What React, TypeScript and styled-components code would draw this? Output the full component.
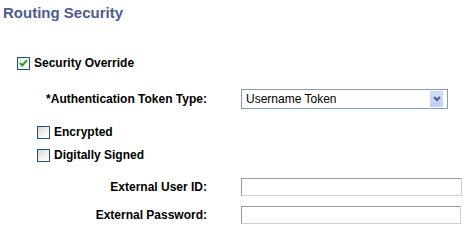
import styled, { createGlobalStyle } from "styled-components";

const GlobalStyle = createGlobalStyle`
  body {
    margin: 0;
    background: #fff;
    font-family: "Liberation Sans", Arial, sans-serif;
  }
`;

const Page = styled.div`
  width: 475px;
  height: 229px;
  padding: 4px 0 0 3px;
  box-sizing: border-box;
  display: flex;
  flex-direction: column;
`;

const Title = styled.h2`
  margin: 0;
  font-size: 15px;
  line-height: 18px;
  font-weight: bold;
  color: #4f5a92;
`;

const Row = styled.div<{ $top: number; $h: number }>`
  margin-top: ${(p) => p.$top}px;
  height: ${(p) => p.$h}px;
  display: flex;
  align-items: center;
`;

const CheckRow = styled(Row)<{ $indent: number }>`
  padding-left: ${(p) => p.$indent - 3}px;
  gap: 4px;
`;

const FieldRow = styled(Row)`
  display: grid;
  grid-template-columns: 204px 207px;
  column-gap: 34px;
`;

const Box = styled.span<{ $checked?: boolean }>`
  width: 13px;
  height: 13px;
  box-sizing: border-box;
  border: 1px solid #1c5180;
  background: ${(p) =>
    p.$checked
      ? "linear-gradient(135deg, #e6e6e0 0%, #ffffff 80%)"
      : "linear-gradient(135deg, #d8d8d2 0%, #f4f4f2 60%, #ffffff 100%)"};
  display: flex;
  align-items: center;
  justify-content: center;
  flex: none;
`;

const Label = styled.span<{ $align?: string }>`
  font-size: 12px;
  font-weight: bold;
  color: #000;
  line-height: 14px;
  text-align: ${(p) => p.$align || "left"};
  white-space: nowrap;
`;

const Select = styled.div`
  width: 207px;
  height: 20px;
  box-sizing: border-box;
  border: 1px solid #7f9db9;
  background: #fff;
  display: flex;
  align-items: center;
  justify-content: space-between;
  padding: 0 4px 0 4px;
  font-size: 12px;
  color: #000;
`;

const ArrowButton = styled.span`
  width: 13px;
  height: 16px;
  box-sizing: border-box;
  background: linear-gradient(180deg, #d4e0fb 0%, #bccdf5 100%);
  border: 1px solid #c8d6f7;
  display: flex;
  align-items: center;
  justify-content: center;
`;

const TextInput = styled.input<{ $w: number }>`
  width: ${(p) => p.$w}px;
  height: 18px;
  box-sizing: border-box;
  margin: 0;
  padding: 0 3px;
  border-style: solid;
  border-width: 1px;
  border-color: #9a9a9a #cfcfcf #cfcfcf #9a9a9a;
  background: #fff;
  font: 12px "Liberation Sans", Arial, sans-serif;
  outline: none;
`;

function Check({ checked }: { checked?: boolean }) {
  return (
    <Box $checked={checked}>
      {checked && (
        <svg width="9" height="8" viewBox="0 0 9 8">
          <path d="M1 4 L3.3 6.5 L8 1.2" fill="none" stroke="#1fa51f" strokeWidth="2" />
        </svg>
      )}
    </Box>
  );
}

export default function App() {
  return (
    <>
      <GlobalStyle />
      <Page>
        <Title>Routing Security</Title>

        <CheckRow $top={31} $h={20} $indent={17}>
          <Check checked />
          <Label>Security Override</Label>
        </CheckRow>

        <FieldRow $top={16} $h={20}>
          <Label $align="right">*Authentication Token Type:</Label>
          <Select>
            <span>Username Token</span>
            <ArrowButton>
              <svg width="8" height="6" viewBox="0 0 8 6">
                <path d="M1 1 L4 4 L7 1" fill="none" stroke="#4d6185" strokeWidth="2" />
              </svg>
            </ArrowButton>
          </Select>
        </FieldRow>

        <CheckRow $top={15} $h={16} $indent={37}>
          <Check />
          <Label>Encrypted</Label>
        </CheckRow>

        <CheckRow $top={7} $h={16} $indent={37}>
          <Check />
          <Label>Digitally Signed</Label>
        </CheckRow>

        <FieldRow $top={15} $h={18}>
          <Label $align="right">External User ID:</Label>
          <TextInput $w={221} />
        </FieldRow>

        <FieldRow $top={10} $h={18}>
          <Label $align="right">External Password:</Label>
          <TextInput $w={220} />
        </FieldRow>
      </Page>
    </>
  );
}
